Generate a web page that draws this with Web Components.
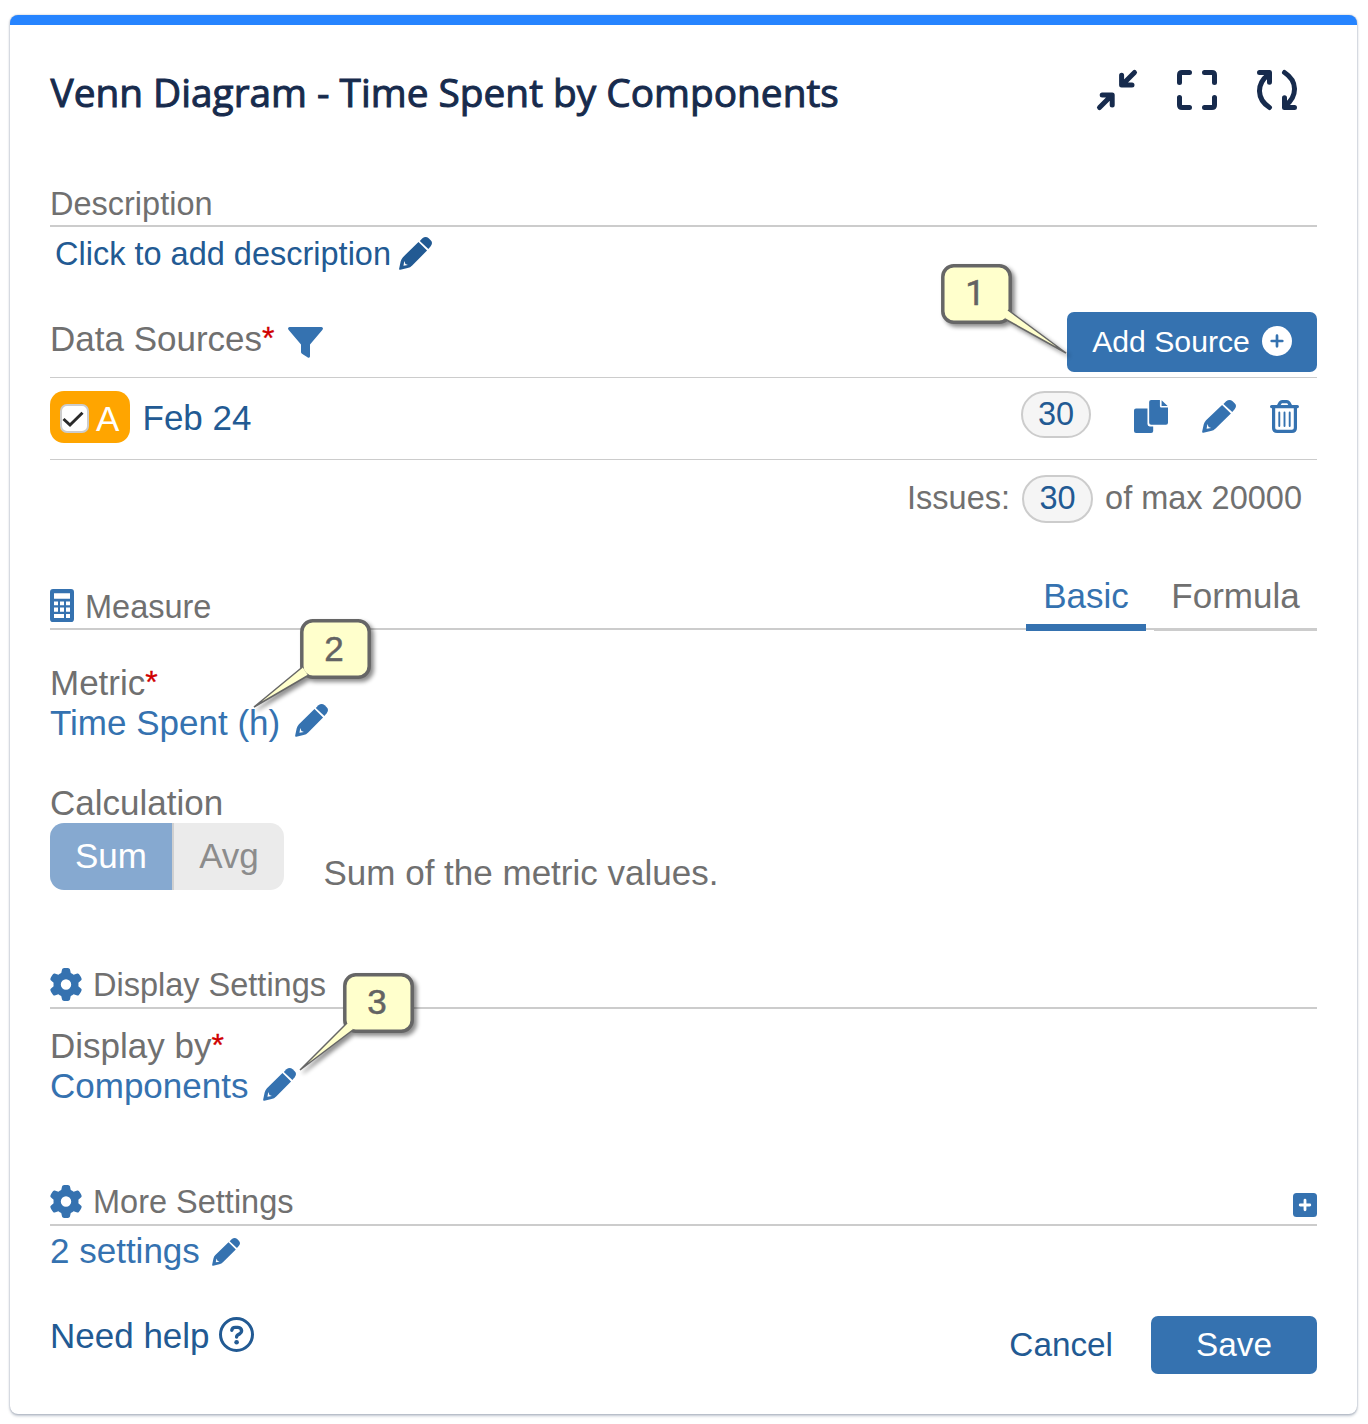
<!DOCTYPE html>
<html lang="en">
<head>
<meta charset="utf-8">
<title>Venn Diagram settings</title>
<style>
html,body{margin:0;background:#fff}
body{width:1368px;height:1424px;overflow:hidden;font-family:"Liberation Sans",Arial,sans-serif}
</style>
</head>
<body>
<gadget-card></gadget-card>
<script>
const ICONS = {
  pencil: ['0 0 100 100', '<path d="M63 12L71 4Q81-4 90 4L96 10Q104 18 96 28L89 36Z"/><path fill-rule="evenodd" d="M59 15L85 41L40 86Q34 92 26 94L4 99.500Q-.5 100 .5 95.500L5 74Q7 66 12 61ZM16 73L13.500 87L27 84.500L19.500 81.500Z"/>'],
  copy: ['0 0 101 100', '<path d="M6 26H40V73Q40 80 47 80H57V94Q57 100 51 100H6Q0 100 0 94V32Q0 26 6 26Z"/><path d="M51 0H77V19Q77 23 81 23H101V69Q101 75 95 75H51Q45 75 45 69V6Q45 0 51 0ZM82 1L100 18H82Z"/>'],
  trash: ['0 0 29 33', '<g fill="none" stroke="currentColor" stroke-linecap="round" stroke-linejoin="round"><path stroke-width="3.200" d="M1.600 6.600H27.400M8.300 6L10.200 2.600Q10.900 1.600 12.100 1.600H16.900Q18.100 1.600 18.800 2.600L20.700 6M3.600 6.600V28Q3.600 31.400 7.200 31.400H21.800Q25.400 31.400 25.400 28V6.600"/><path stroke-width="1.900" d="M9.300 12.500V26M14.500 12.500V26M19.700 12.500V26"/></g>'],
  filter: ['0 0 35 31', '<path d="M1.500 0H33.500Q36 .8 34.300 3L22 17.500V29.500Q21.500 31.200 19.800 30.500L14 26.800Q13 26 13 25V17.500L.7 3Q-1 .8 1.500 0Z"/>'],
  calc: ['0 0 24 32', '<path fill-rule="evenodd" d="M3 0H21Q24 0 24 3V29Q24 32 21 32H3Q0 32 0 29V3Q0 0 3 0ZM4 4V9.500H20V4ZM4 12V15.800H8V12ZM10 12V15.800H14V12ZM16 12V15.800H20V12ZM4 18V22H8V18ZM10 18V22H14V18ZM16 18V22H20V18ZM4 24.300V28H14V24.300ZM16 24.300V28H20V24.300Z"/>'],
  gear: ['10 0 492 512', '<path d="M495.9 166.6c3.2 8.7 .5 18.4-6.4 24.6l-43.3 39.4c1.1 8.3 1.7 16.8 1.7 25.4s-.6 17.1-1.7 25.4l43.3 39.4c6.9 6.2 9.6 15.9 6.4 24.6c-4.4 11.9-9.7 23.3-15.8 34.3l-4.7 8.1c-6.6 11-14 21.4-22.1 31.2c-5.9 7.2-15.7 9.6-24.5 6.8l-55.7-17.7c-13.4 10.3-28.2 18.9-44 25.4l-12.5 57.1c-2 9.1-9 16.3-18.2 17.8c-13.8 2.3-28 3.5-42.5 3.5s-28.7-1.2-42.5-3.5c-9.2-1.5-16.2-8.7-18.2-17.8l-12.5-57.1c-15.8-6.5-30.6-15.1-44-25.400L83.100 425.900c-8.800 2.800-18.600 .3-24.500-6.800c-8.100-9.800-15.500-20.200-22.100-31.200l-4.700-8.100c-6.100-11-11.400-22.400-15.800-34.300c-3.200-8.700-.5-18.400 6.400-24.600l43.300-39.400C64.600 273.100 64 264.600 64 256s.6-17.100 1.700-25.400L22.400 191.200c-6.900-6.200-9.600-15.900-6.400-24.600c4.400-11.900 9.700-23.300 15.800-34.300l4.700-8.100c6.600-11 14-21.400 22.100-31.200c5.900-7.200 15.700-9.600 24.500-6.800l55.700 17.700c13.400-10.300 28.200-18.900 44-25.400l12.500-57.100c2-9.100 9-16.300 18.200-17.800C227.300 1.200 241.500 0 256 0s28.700 1.200 42.500 3.500c9.200 1.500 16.200 8.700 18.200 17.800l12.500 57.100c15.800 6.500 30.600 15.100 44 25.400l55.700-17.700c8.800-2.800 18.600-.3 24.500 6.800c8.100 9.800 15.500 20.200 22.100 31.200l4.700 8.100c6.100 11 11.400 22.400 15.800 34.300zM256 336a80 80 0 1 0 0-160 80 80 0 1 0 0 160z"/>'],
  plusCircle: ['0 0 30 30', '<circle cx="15" cy="15" r="15"/><path d="M15 9.700V20.300M9.700 15H20.300" stroke="#3572b0" stroke-width="2.700" stroke-linecap="round"/>'],
  plusSquare: ['0 0 24 24', '<rect width="24" height="24" rx="3.500"/><path d="M12 7.200V16.800M7.200 12H16.800" stroke="#fff" stroke-width="2.800" stroke-linecap="round"/>'],
  help: ['0 0 35 35', '<g fill="none" stroke="currentColor"><circle cx="17.500" cy="17.500" r="16" stroke-width="3"/><path stroke-width="3.400" stroke-linecap="round" d="M12.800 13.300Q13.200 10.400 16.200 10.400H18.900Q22.400 10.600 22.600 13.900Q22.500 15.800 20.800 16.800L18.700 18Q17.600 18.700 17.600 20"/></g><circle cx="17.600" cy="25.300" r="2.300"/>'],
  collapse: ['0 0 40 40', '<path class="l" d="M37.500 2.500L26 14M24.600 5.200V15H35M2.500 37.500L14 26M5.200 25H15.200V35"/>'],
  expand: ['0 0 40 40', '<path class="l" d="M2.500 12.500V5Q2.500 2.500 5 2.500H12.500M27.500 2.500H35Q37.500 2.500 37.500 5V12.500M37.500 27.500V35Q37.500 37.500 35 37.500H27.500M12.500 37.500H5Q2.500 37.500 2.500 35V27.500"/>'],
  refresh: ['0 0 40 40', '<path class="l" d="M2.500 2.500H12.500V12.300M12.500 37.500C-.5 29-.8 14 11.500 4.500M37.500 37.500H27.500V27.700M27.500 2.500C40.500 11 40.800 26 28.500 35.500"/>'],
  check: ['0 0 22 16', '<path d="M1.500 8L8 14L20.500 1.800" fill="none" stroke="#2a2a2a" stroke-width="3"/>']
};
const make = (name, html) => customElements.define(name, class extends HTMLElement {
  constructor(){
    super();
    this.attachShadow({mode:'open'}).innerHTML = typeof html === 'function' ? html(this) : html;
  }
});

make('ui-icon', el => {
  const [box, body] = ICONS[el.getAttribute('name')];
  return `<style>:host{display:block;flex:none;width:${el.getAttribute('w')}px;height:${el.getAttribute('h')}px}
  svg{display:block;width:100%;height:100%;fill:currentColor;overflow:visible}
  .l{fill:none;stroke:currentColor;stroke-width:5;stroke-linecap:round;stroke-linejoin:round}</style>
  <svg viewBox="${box}" preserveAspectRatio="none">${body}</svg>`;
});

make('section-heading', `<style>
  :host{display:flex;align-items:flex-end;gap:11px;border-bottom:2px solid #ccc;color:#707070;font-size:32.5px}
  .t{line-height:40px;margin-bottom:var(--gap,1px);white-space:nowrap}
  .end{margin-left:auto}
  </style><slot name="icon"></slot><span class="t"><slot></slot></span><span class="end"><slot name="end"></slot></span>`);

make('field-label', el => `<style>
  :host{display:block;height:40px;line-height:39px;font-size:35px;color:#707070;white-space:nowrap}
  b{font-weight:400;font-size:32px;line-height:1;vertical-align:2px;color:#d00000;-webkit-text-stroke:.3px #d00000}</style><slot></slot>${el.hasAttribute('required') ? '<b>*</b>' : ''}`);

make('edit-link', el => `<style>
  :host{display:flex;align-items:center;height:39px;line-height:39px;font-size:35px;color:#3572b0;white-space:nowrap}
  ui-icon{margin-left:var(--space,15px);margin-top:var(--lift,-4px)}</style><span><slot></slot></span>
  <ui-icon name="pencil" w="${el.getAttribute('size') || 33}" h="${el.getAttribute('size') || 33}"></ui-icon>`);

make('count-pill', `<style>
  :host{display:flex;box-sizing:border-box;align-items:center;justify-content:center;width:71px;height:48px;border:2px solid #ccc;border-radius:24px;background:#f5f5f5;color:#225a93;font-size:32.5px;line-height:40px}
  span{margin-top:-2px}
  </style><span><slot></slot></span>`);

make('primary-button', `<style>
  :host{display:flex;box-sizing:border-box;align-items:center;justify-content:center;gap:12px;border-radius:7px;background:#3572b0;color:#fff;white-space:nowrap}
  </style><slot></slot>`);

make('tab-bar', `<style>
  :host{display:flex;gap:8px;margin-bottom:-3px;font-size:35px}
  span{box-sizing:border-box;height:60px;line-height:49px;text-align:center}
  .on{width:120px;color:#3572b0;border-bottom:7px solid #3572b0}
  .off{width:163px;border-bottom:2px solid #ccc}
  </style><span class="on">Basic</span><span class="off">Formula</span>`);

make('calc-toggle', `<style>
  :host{display:flex;width:234px;height:67px;border-radius:14px;overflow:hidden;font-size:35px;line-height:65px;text-align:center}
  .on{width:122px;background:#86a9d0;color:#fff}
  .off{flex:1;background:#ebebeb;color:#8c8c8c;border-left:2px solid #d0d0d0}
  </style><span class="on">Sum</span><span class="off">Avg</span>`);

make('source-badge', `<style>
  :host{display:flex;box-sizing:border-box;align-items:center;width:80px;height:52px;padding-left:10px;gap:7px;border-radius:14px;background:#ffa500;color:#fff;font-size:35px;line-height:52px}
  i{box-sizing:border-box;display:flex;align-items:center;justify-content:flex-start;width:29px;height:29px;margin-top:3px;border:2px solid #ccc;border-radius:7px;background:#fff}
  span{margin-top:3px}
  </style><i><ui-icon name="check" w="22" h="16"></ui-icon></i><span><slot></slot></span>`);

make('call-out', el => {
  const [x1,y1,tx,ty,x2,y2] = el.getAttribute('tail').split(' ');
  return `<style>
  :host{position:absolute;width:71px;height:60px;color:#636363}
  svg{position:absolute;inset:0;overflow:visible;filter:drop-shadow(3px 3px 2px rgba(0,0,0,.45))}
  span{position:absolute;inset:0;text-align:center;font-size:35px;line-height:var(--lh,58px);padding-right:3px;-webkit-text-stroke:.5px #636363}
  </style><svg width="71" height="60"><rect x="1.800" y="1.800" width="67.400" height="56.400" rx="11" fill="#ffffcc" stroke="#666" stroke-width="3.500"/>
  <path d="M${x1} ${y1}L${tx} ${ty}L${x2} ${y2}" fill="#ffffcc" stroke="#666" stroke-width="1.500"/></svg><span><slot></slot></span>`;
});

make('gadget-card', `<style>
  :host{display:block;position:relative;box-sizing:border-box;width:1368px;height:1424px;padding:15px 11px 10px 10px}
  .card{box-sizing:border-box;height:1399px;padding:0 40px;border-top:10px solid #2684ff;border-radius:8px;background:#fff;box-shadow:0 0 2px rgba(9,30,66,.31),0 2px 3px rgba(9,30,66,.25)}
  header{display:flex;align-items:center;height:130px;padding-right:20px;gap:40px;color:#172b4d}
  h1{flex:1;margin:0;padding:3px 0 0 .5px;font:400 38.8px/50px "Open Sans","Noto Sans",sans-serif;-webkit-text-stroke:1px #172b4d;white-space:nowrap}
  .row{display:flex;align-items:center}
  .dark{color:#225a93}
  .blue{color:#3572b0}
  .ds{align-items:flex-start;height:65px;border-bottom:1px solid #ccc}
  .ds field-label{margin-top:7px}
  .src{height:78px;padding:0 18px 3px 0;border-bottom:1px solid #ccc;font-size:35px;line-height:39px}
  .issues{justify-content:flex-end;height:48px;margin-top:15px;padding-right:15px;gap:12px;font-size:32.5px;line-height:40px;color:#707070}
  .issues span{margin-top:-2px}
  .foot{align-items:flex-start;height:58px;margin-top:46px}
  </style>
  <div class="card">
    <header><h1>Venn Diagram - Time Spent by Components</h1>
      <ui-icon name="collapse" w="40" h="40"></ui-icon><ui-icon name="expand" w="40" h="40"></ui-icon><ui-icon name="refresh" w="40" h="40"></ui-icon>
    </header>
    <section-heading style="margin-top:29px">Description</section-heading>
    <edit-link style="color:#225a93;margin:7px 0 0 5px;height:40px;line-height:40px;font-size:32.5px;--space:8px;--lift:-2px">Click to add description</edit-link>
    <div class="row ds" style="margin-top:38px">
      <field-label required>Data Sources</field-label>
      <ui-icon class="blue" name="filter" w="35" h="31" style="margin:15px auto 0 13px"></ui-icon>
      <primary-button style="width:250px;height:60px;font-size:30.2px">Add Source<ui-icon name="plusCircle" w="30" h="30" style="margin-top:-2px"></ui-icon></primary-button>
    </div>
    <div class="row src dark">
      <source-badge>A</source-badge><span style="margin-left:12.5px">Feb 24</span>
      <count-pill style="width:70px;height:47px;margin:-5px 43px 0 auto">30</count-pill>
      <ui-icon class="blue" name="copy" w="34" h="33" style="margin-top:-2px"></ui-icon>
      <ui-icon class="blue" name="pencil" w="34" h="33" style="margin:-2px 0 0 34px"></ui-icon>
      <ui-icon class="blue" name="trash" w="29" h="33" style="margin:-2px 0 0 34px"></ui-icon>
    </div>
    <div class="row issues"><span>Issues:</span><count-pill>30</count-pill><span>of max 20000</span></div>
    <section-heading style="margin-top:48px"><ui-icon slot="icon" class="blue" name="calc" w="24" h="33" style="margin-bottom:6px"></ui-icon>Measure<tab-bar slot="end"></tab-bar></section-heading>
    <field-label required style="margin-top:33px">Metric</field-label>
    <edit-link>Time Spent (h)</edit-link>
    <field-label style="margin-top:41px">Calculation</field-label>
    <div class="row" style="height:67px;color:#707070;font-size:35px;line-height:39px"><calc-toggle></calc-toggle><span style="margin:32px 0 0 39.5px">Sum of the metric values.</span></div>
    <section-heading style="margin-top:75px;--gap:2px"><ui-icon slot="icon" class="blue" name="gear" w="32" h="33" style="margin-bottom:6px"></ui-icon>Display Settings</section-heading>
    <field-label required style="margin-top:17px">Display by</field-label>
    <edit-link style="--lift:-2px">Components</edit-link>
    <section-heading style="margin-top:77px;--gap:2px"><ui-icon slot="icon" class="blue" name="gear" w="32" h="33" style="margin-bottom:6px"></ui-icon>More Settings<ui-icon slot="end" class="blue" name="plusSquare" w="24" h="24" style="margin-bottom:7px"></ui-icon></section-heading>
    <edit-link size="28" style="margin-top:5px;--space:12px;--lift:2px">2 settings</edit-link>
    <div class="row foot dark">
      <span style="font-size:35px;line-height:39px">Need help</span>
      <ui-icon name="help" w="35" h="35" style="margin:1px auto 0 9px"></ui-icon>
      <span style="font-size:33.3px;line-height:57px;margin-right:38px">Cancel</span>
      <primary-button style="width:166px;height:58px;font-size:33.3px">Save</primary-button>
    </div>
  </div>
  <call-out tail="67 46 125 89 64 55" style="left:941px;top:264px;font-family:Roboto,sans-serif;--lh:59px">1</call-out>
  <call-out tail="2.5 48 -46 88 8 56.500" style="left:300px;top:619px;--lh:59px">2</call-out>
  <call-out tail="4 50 -43 97 10.500 56.500" style="left:343px;top:973px">3</call-out>`);
</script>
</body>
</html>
